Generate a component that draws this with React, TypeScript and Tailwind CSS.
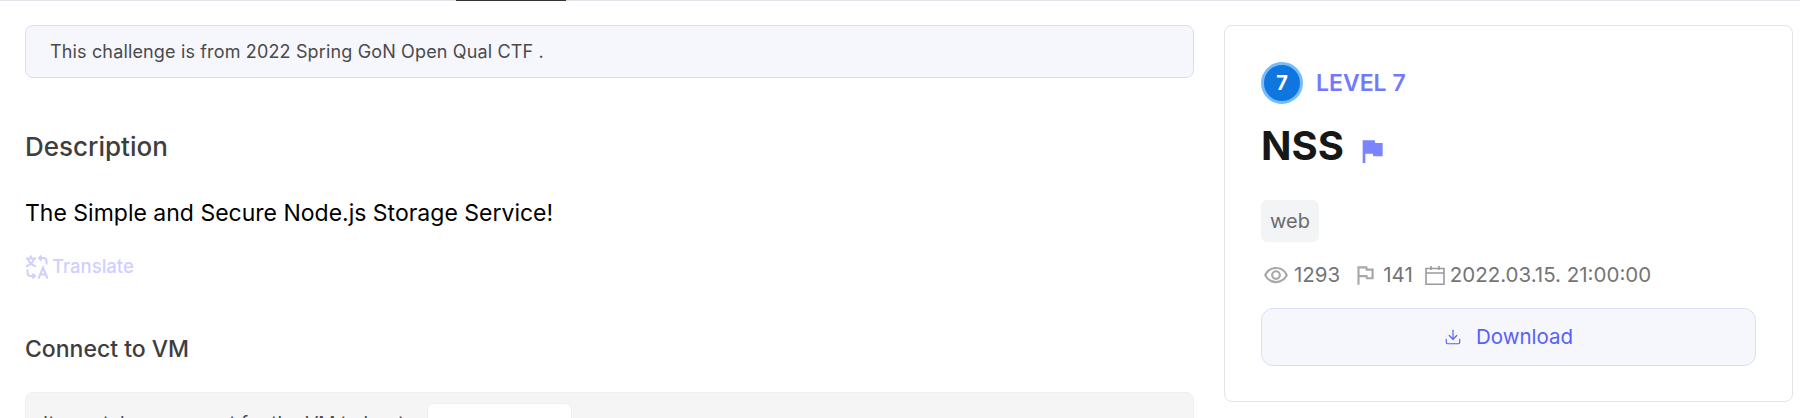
import type { ReactNode } from "react";
import { Download } from "lucide-react";
import { MdFlag, MdOutlineFlag, MdOutlineRemoveRedEye } from "react-icons/md";

function Stat({ icon, label }: { icon: ReactNode; label: string }) {
  return (
    <span className="flex items-center gap-[5px]">
      {icon}
      {label}
    </span>
  );
}

function CalendarIcon() {
  return (
    <svg viewBox="0 0 20 20" className="h-[22px] w-[20px] text-[#9a9a9a]" fill="none" stroke="currentColor" strokeWidth="1.6">
      <path d="M1 3.5h18v15.7H1zM1 8h18M6 1v4M14 1v4" />
    </svg>
  );
}

function TranslateIcon() {
  return (
    <svg viewBox="0 0 24 24" className="h-6 w-6" fill="none" stroke="currentColor" strokeWidth="2">
      <path d="M6 0.5v2.5M1 3.5h10M3 4c1 3.5 4 6 8 7.5M9 4c-1 3.5-4 6-8 7.5" />
      <path d="M21.5 9.5V6a3 3 0 0 0-3-3H14M16.5 0.5 14 3l2.5 2.5" />
      <path d="M2.5 14.5V18a3 3 0 0 0 3 3H10M7.5 18.5 10 21l-2.5 2.5" />
      <path d="M13.5 23.5l4.5-11 4.5 11M15 19.5h6" />
    </svg>
  );
}

export default function App() {
  return (
    <div className="h-[418px] overflow-hidden bg-white font-['Inter',sans-serif]">
      <div className="relative h-px bg-[#e2e2ea]">
        <div className="absolute left-[456px] top-0 h-px w-[110px] bg-[#333333]" />
      </div>

      <div className="flex items-start gap-[30px] pl-[25px] pt-[24px]">
        <main className="w-[1169px] shrink-0">
          <div className="flex h-[53px] items-center rounded-lg border border-[#dcdcf5] bg-[#f6f7fd] px-6 text-lg tracking-[0.15px] text-[#4a4a4a]">
            This challenge is from 2022 Spring GoN Open Qual CTF .
          </div>

          <h2 className="mt-[53px] text-[26px] font-medium leading-8 text-[#3e3e3e]">Description</h2>
          <p className="mt-[34px] text-[23px] leading-8 text-black">
            The Simple and Secure Node.js Storage Service!
          </p>
          <div className="mt-[26px] flex h-6 items-center gap-[3px] text-[18.5px] font-medium text-[#cfd0ff]">
            <TranslateIcon />
            Translate
          </div>

          <h2 className="mt-[54px] text-[23px] font-medium leading-8 text-[#3e3e3e]">Connect to VM</h2>
          <div className="mt-[27px] flex h-[60px] rounded-lg border border-[#f0f0f0] bg-[#f5f5f5] pl-[17px] pt-2.5">
            <span className="w-[384px] pt-[7px] text-[19px] leading-7 text-[#4a4a4a]">It may take a moment for the VM to boot</span>
            <span className="h-10 w-[145px] rounded-md border border-[#eeeeee] bg-white" />
          </div>
        </main>

        <aside className="h-[377px] w-[569px] shrink-0 rounded-lg border border-[#e4e4e8] bg-white px-[36px] pt-[36px]">
          <div className="flex items-center gap-[13px]">
            <span className="flex h-[42px] w-[42px] items-center justify-center rounded-full border-[3px] border-[#74bdfa] bg-[#0f76e0] text-xl font-bold text-white">
              7
            </span>
            <span className="text-[23px] font-semibold text-[#7279fb]">LEVEL 7</span>
          </div>

          <div className="mt-[14px] flex items-center gap-3">
            <h1 className="text-[40px] leading-[56px] font-bold text-[#171717]">NSS</h1>
            <MdFlag className="mt-[9px] h-8 w-8 text-[#7c83ff]" />
          </div>

          <div className="mt-[26px] flex h-[42px] w-fit items-center rounded-md bg-[#f3f4f6] px-[9px] text-xl text-[#6b6b6b]">
            web
          </div>

          <div className="mt-[17px] flex h-8 items-center gap-3 pl-[2px] text-[20.5px] text-[#757575]">
            <Stat icon={<MdOutlineRemoveRedEye className="h-[26px] w-[26px] text-[#a8a8a8]" />} label="1293" />
            <Stat icon={<MdOutlineFlag className="h-[26px] w-[26px] text-[#a8a8a8]" />} label="141" />
            <Stat icon={<CalendarIcon />} label="2022.03.15. 21:00:00" />
          </div>

          <button className="mt-[17px] flex h-[58px] w-full items-center justify-center gap-[14px] rounded-xl border border-[#dcdcfb] bg-[#f6f7fd] text-[20.5px] text-[#5860fb]">
            <Download className="h-[18px] w-[18px]" strokeWidth={1.6} />
            Download
          </button>
        </aside>
      </div>
    </div>
  );
}
